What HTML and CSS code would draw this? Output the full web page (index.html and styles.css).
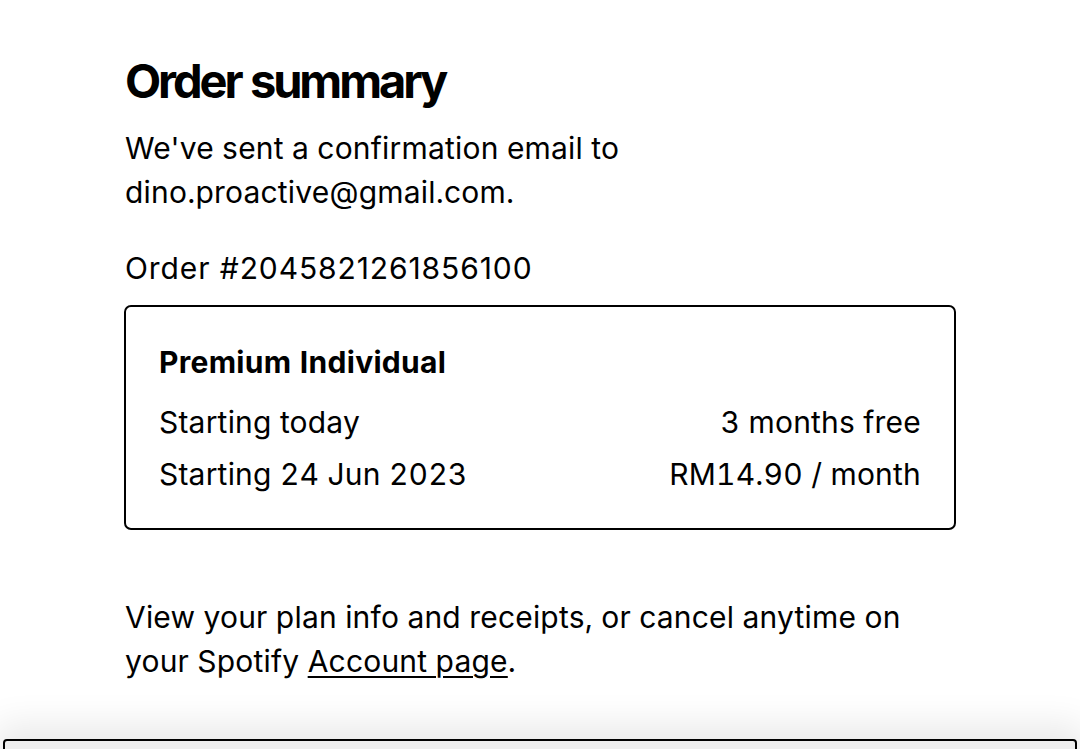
FILE: index.html
```html
<!DOCTYPE html>
<html lang="en">
<head>
<meta charset="utf-8">
<title>Order summary</title>
<link rel="stylesheet" href="styles.css">
</head>
<body>
<main class="summary">
  <h1 class="summary-title">Order summary</h1>
  <p class="summary-text">We've sent a confirmation email to<br>dino.proactive@gmail.com.</p>
  <p class="summary-order">Order #2045821261856100</p>

  <section class="plan-card">
    <h2 class="plan-name">Premium Individual</h2>
    <div class="plan-row">
      <span>Starting today</span>
      <span>3 months free</span>
    </div>
    <div class="plan-row">
      <span>Starting 24 Jun 2023</span>
      <span>RM14.90 / month</span>
    </div>
  </section>

  <p class="summary-note">View your plan info and receipts, or cancel anytime on<br>your Spotify <a class="summary-link" href="#">Account page</a>.</p>
</main>

<footer class="action-bar"></footer>
</body>
</html>
```

FILE: styles.css
```css
* {
  box-sizing: border-box;
}

html, body {
  margin: 0;
  background: #ffffff;
}

body {
  font-family: "Inter", "Noto Sans", sans-serif;
  color: #000000;
  overflow: hidden;
  height: 749px;
  font-feature-settings: "tnum" 1;
}

.summary {
  display: flex;
  flex-direction: column;
  width: 832px;
  margin-left: 124px;
  padding-top: 53px;
}

.summary-title {
  margin: 0;
  font-size: 47px;
  line-height: 56px;
  font-weight: 700;
  letter-spacing: -0.066em;
  padding-left: 1px;
}

.summary-text,
.summary-order,
.summary-note {
  margin: 0;
  padding-left: 1px;
  font-size: 30px;
  line-height: 44px;
  letter-spacing: 0.2px;
}

.summary-text {
  margin-top: 17px;
}

/* order number uses proportional figures with a little extra tracking */
.summary-order {
  margin-top: 32px;
  font-feature-settings: "tnum" 0;
  letter-spacing: 0.9px;
}

.plan-card {
  margin-top: 15px;
  border: 2px solid #000000;
  border-radius: 7px;
  padding: 33px 33px 32px 33px;
  display: flex;
  flex-direction: column;
  gap: 8px;
}

.plan-name {
  margin: 0 0 8px 0;
  font-size: 30px;
  line-height: 44px;
  font-weight: 700;
  letter-spacing: 0.3px;
}

.plan-row {
  display: flex;
  justify-content: space-between;
  font-size: 30px;
  line-height: 44px;
  letter-spacing: 0.2px;
}

.summary-note {
  margin-top: 65px;
}

.summary-link {
  color: inherit;
  text-decoration: underline;
  text-decoration-thickness: 2px;
  text-underline-offset: 4px;
}

/* sticky bar peeking in at the bottom of the viewport */
.action-bar {
  position: fixed;
  left: 3px;
  right: 3px;
  top: 739px;
  height: 60px;
  background: #eeeeee;
  border: 2px solid #000000;
  border-radius: 4px;
  box-shadow: 0 -6px 36px 8px rgba(0, 0, 0, 0.09);
}
```
